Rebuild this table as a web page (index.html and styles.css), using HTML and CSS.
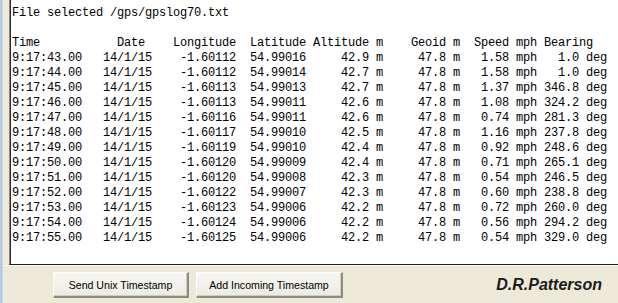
FILE: index.html
```html
<!DOCTYPE html>
<html>
<head>
<meta charset="utf-8">
<link rel="stylesheet" href="styles.css">
</head>
<body>
<div class="strip"></div>
<div class="window">
<pre class="log">File selected /gps/gpslog70.txt

Time           Date    Longitude  Latitude Altitude m    Geoid m  Speed mph Bearing
9:17:43.00   14/1/15    -1.60112  54.99016     42.9 m     47.8 m   1.58 mph   1.0 deg
9:17:44.00   14/1/15    -1.60112  54.99014     42.7 m     47.8 m   1.58 mph   1.0 deg
9:17:45.00   14/1/15    -1.60113  54.99013     42.7 m     47.8 m   1.37 mph 346.8 deg
9:17:46.00   14/1/15    -1.60113  54.99011     42.6 m     47.8 m   1.08 mph 324.2 deg
9:17:47.00   14/1/15    -1.60116  54.99011     42.6 m     47.8 m   0.74 mph 281.3 deg
9:17:48.00   14/1/15    -1.60117  54.99010     42.5 m     47.8 m   1.16 mph 237.8 deg
9:17:49.00   14/1/15    -1.60119  54.99010     42.4 m     47.8 m   0.92 mph 248.6 deg
9:17:50.00   14/1/15    -1.60120  54.99009     42.4 m     47.8 m   0.71 mph 265.1 deg
9:17:51.00   14/1/15    -1.60120  54.99008     42.3 m     47.8 m   0.54 mph 246.5 deg
9:17:52.00   14/1/15    -1.60122  54.99007     42.3 m     47.8 m   0.60 mph 238.8 deg
9:17:53.00   14/1/15    -1.60123  54.99006     42.2 m     47.8 m   0.72 mph 260.0 deg
9:17:54.00   14/1/15    -1.60124  54.99006     42.2 m     47.8 m   0.56 mph 294.2 deg
9:17:55.00   14/1/15    -1.60125  54.99006     42.2 m     47.8 m   0.54 mph 329.0 deg</pre>
<div class="footer">
<button class="btn btn-send">Send Unix Timestamp</button>
<button class="btn btn-add">Add Incoming Timestamp</button>
<div class="author">D.R.Patterson</div>
</div>
</div>
</body>
</html>
```
FILE: styles.css
```css
html, body {
  margin: 0;
  padding: 0;
}
body {
  width: 618px;
  height: 303px;
  overflow: hidden;
  display: flex;
  background: #ece9d8;
}
.strip {
  width: 3px;
  flex: none;
  background: linear-gradient(to right, #c9d8ec 0, #a8c0e4 33%, #b9cde9 66%, #e4e6e8 100%);
}
.window {
  flex: 1;
  display: flex;
  flex-direction: column;
  min-width: 0;
}
.log {
  margin: 0 0 0 6px;
  height: 258px;
  padding: 6px 0 0 2px;
  background: #fff;
  border-left: 1px solid #8a8a8a;
  box-shadow: inset 1px 0 0 #2a2a2a;
  border-bottom: 1px solid #1e1e1e;
  font-family: "Liberation Mono", monospace;
  font-size: 12px;
  letter-spacing: -0.2px;
  line-height: 15px;
  color: #000;
  overflow: hidden;
  white-space: pre;
}
.footer {
  flex: 1;
  display: flex;
  align-items: flex-start;
  padding: 6px 0 0 50px;
  gap: 7px;
  border-top: 1px solid #fbfaf5;
}
.btn {
  height: 26px;
  padding: 0;
  margin: 0;
  font-family: "Liberation Sans", Arial, sans-serif;
  font-size: 10.6px;
  color: #000;
  background: linear-gradient(#f7f6f1, #ecebe3);
  border-style: solid;
  border-width: 1px 2px 2px 1px;
  border-color: #fdfdfb #8e8c82 #8e8c82 #fdfdfb;
  box-shadow: inset -1px -1px 0 #cfcdc3;
}
.btn-send {
  width: 136px;
}
.btn-add {
  width: 147px;
}
.author {
  margin-left: auto;
  margin-right: 16px;
  margin-top: 4px;
  font-family: "Liberation Sans", Arial, sans-serif;
  font-weight: bold;
  font-style: italic;
  font-size: 16px;
  color: #1a1a1a;
}
```
